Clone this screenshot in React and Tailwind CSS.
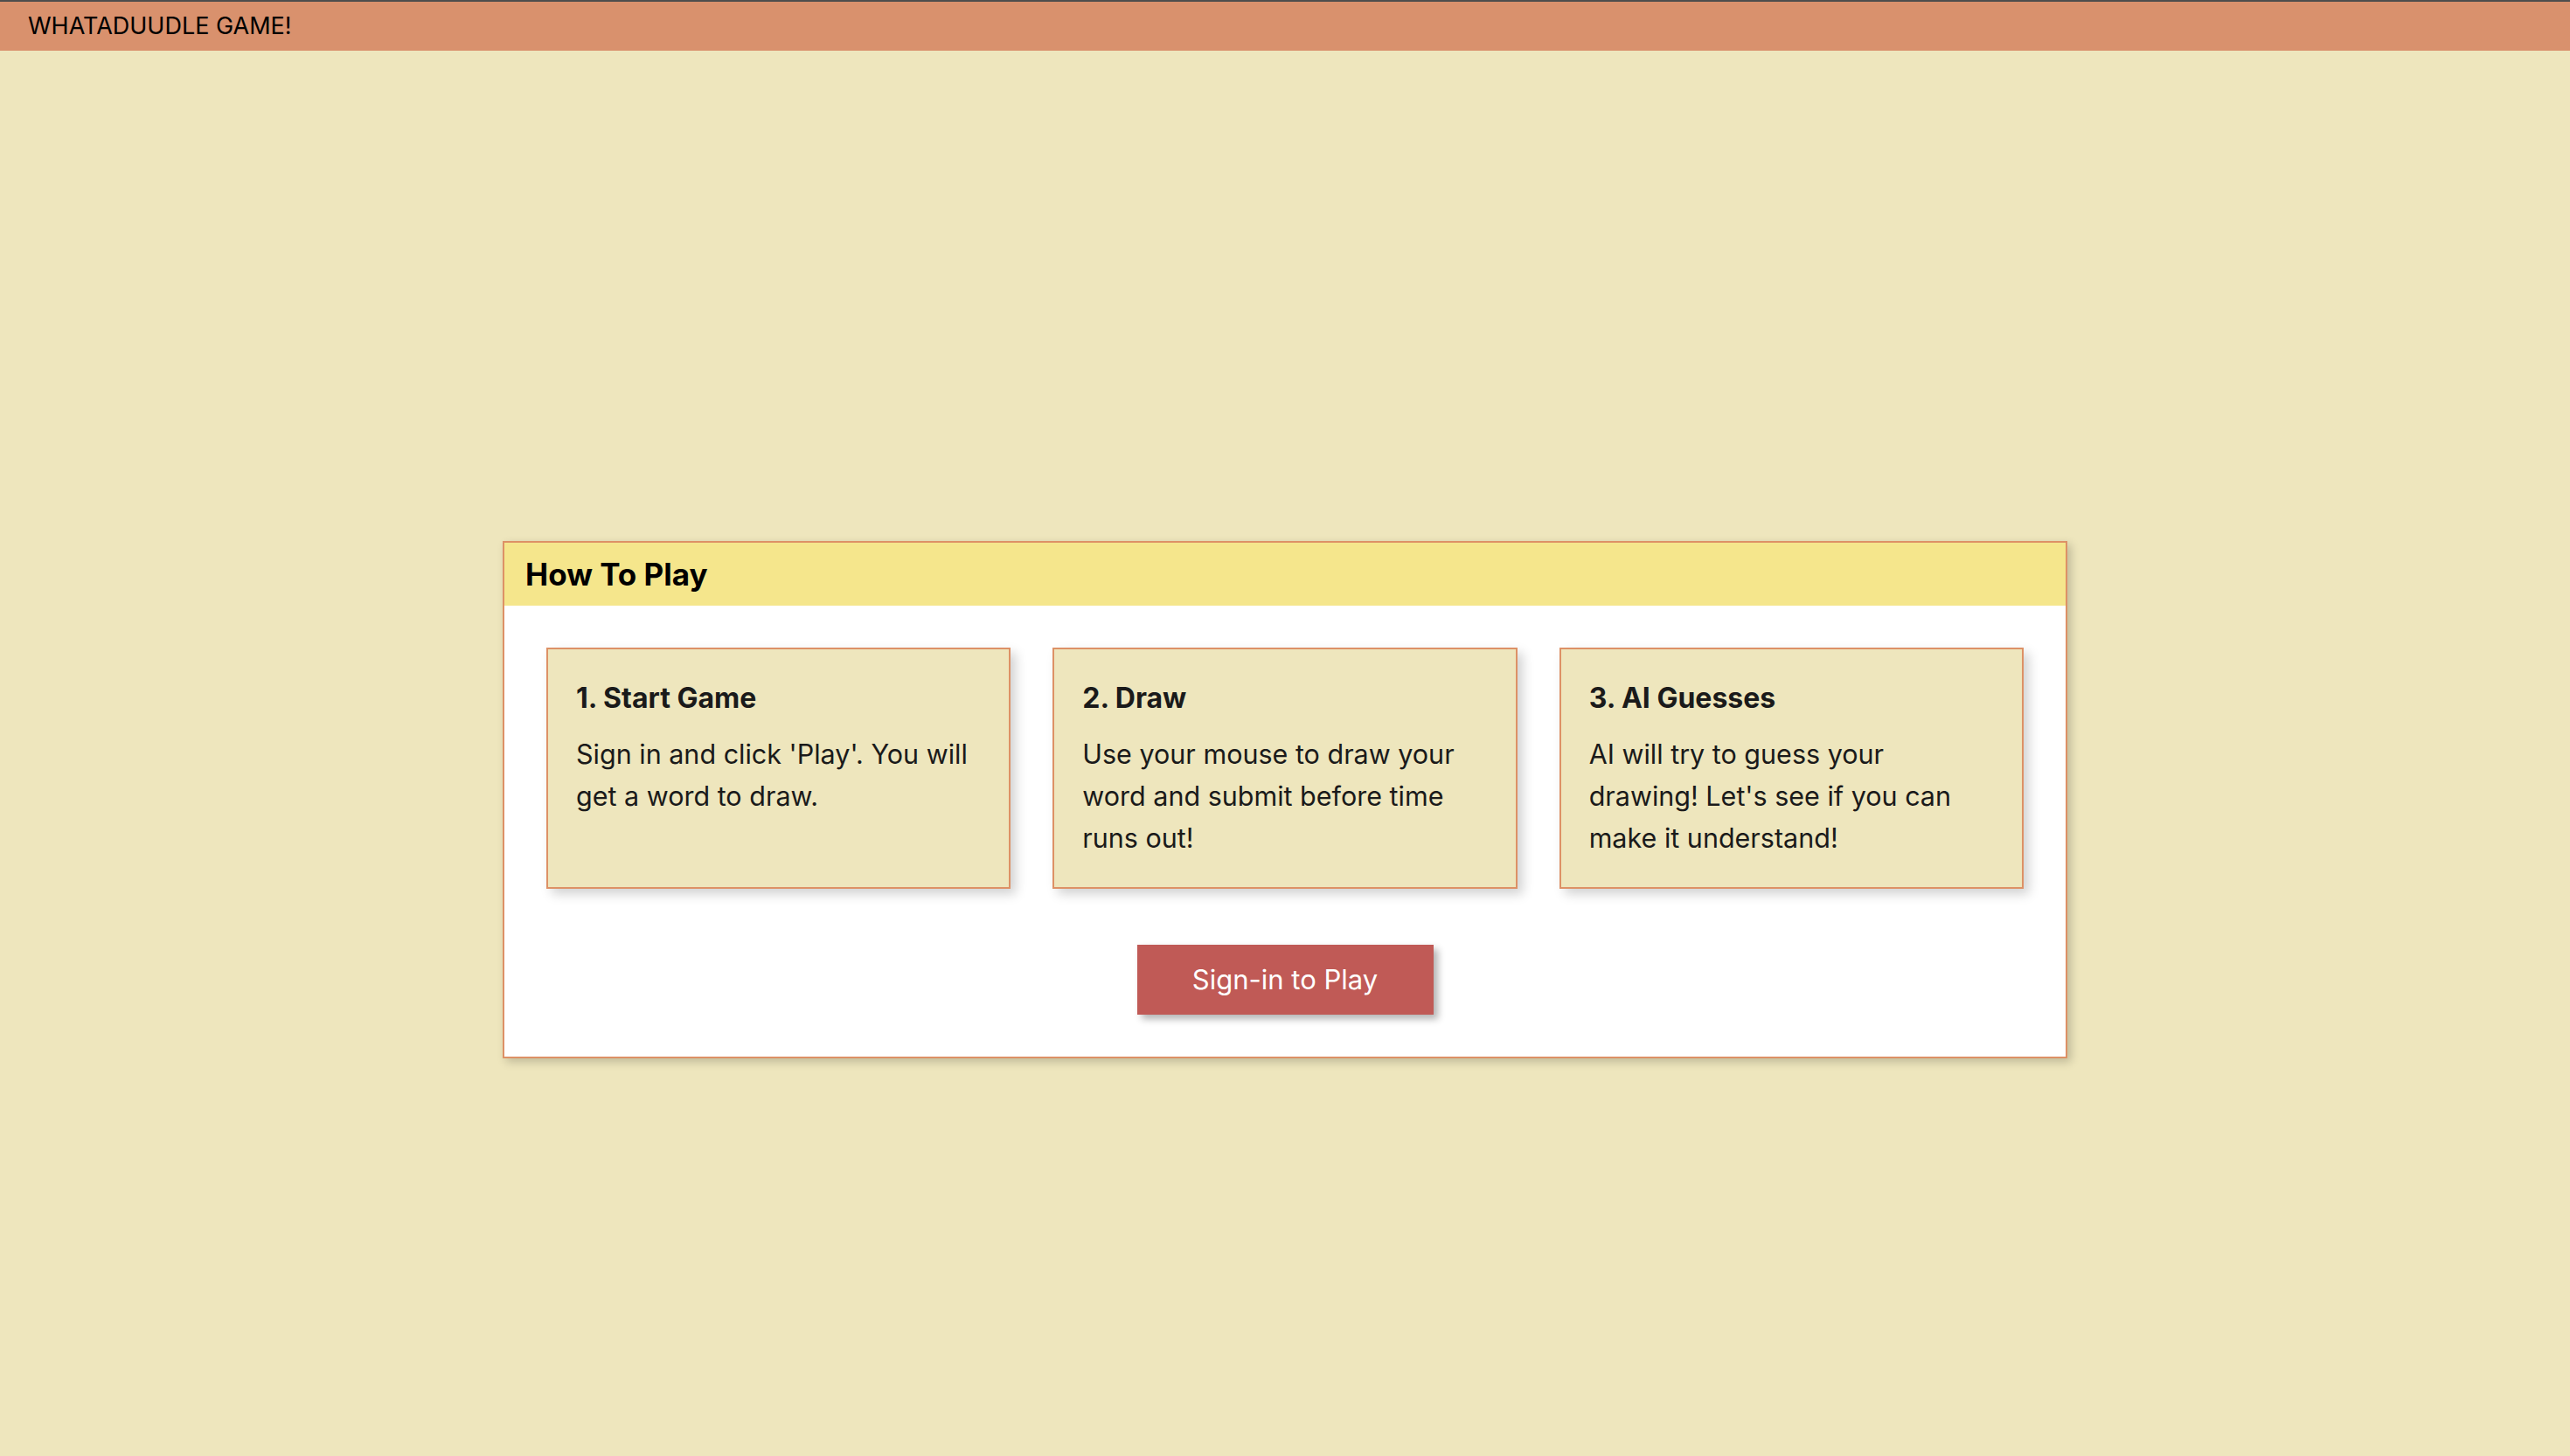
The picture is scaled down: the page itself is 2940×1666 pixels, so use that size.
import React from "react";

const steps = [
  { title: "1. Start Game", text: "Sign in and click 'Play'. You will get a word to draw." },
  { title: "2. Draw", text: "Use your mouse to draw your word and submit before time runs out!" },
  { title: "3. AI Guesses", text: "AI will try to guess your drawing! Let's see if you can make it understand!" },
];

function StepCard({ title, text }) {
  return (
    <div className="bg-[#eee6bd] border-2 border-[#dd9166] p-[32px] shadow-[6px_6px_12px_rgba(0,0,0,0.18)]">
      <h3 className="text-[32px] leading-[48px] font-bold text-[#1a1a1a]">{title}</h3>
      <p className="mt-[16px] text-[30.5px] leading-[48px] text-[#1a1a1a]">{text}</p>
    </div>
  );
}

export default function App() {
  return (
    <div className="min-h-screen bg-[#eee6bd] font-['Inter','Liberation_Sans',sans-serif]">
      {/* top bar */}
      <div className="h-[2px] bg-[#4d4d4d]"></div>
      <header className="h-[56px] bg-[#d9916d] flex items-center px-[32px]">
        <span className="text-[27px] text-black">WHATADUUDLE GAME!</span>
      </header>

      {/* how to play */}
      <main className="flex justify-center pt-[561px] pb-[100px]">
        <div className="w-[1790px] bg-white border-2 border-[#dd9166] shadow-[4px_4px_10px_rgba(0,0,0,0.2)]">
          <div className="h-[72px] bg-[#f5e68c] flex items-center px-[24px]">
            <h2 className="text-[35px] font-bold text-black">How To Play</h2>
          </div>
          <div className="p-[48px]">
            <div className="grid grid-cols-3 gap-[48px]">
              {steps.map((s) => (
                <StepCard key={s.title} title={s.title} text={s.text} />
              ))}
            </div>
            <div className="flex justify-center mt-[64px]">
              <button className="bg-[#c05a56] text-white text-[31px] leading-[48px] w-[339px] py-[16px] shadow-[5px_5px_8px_rgba(0,0,0,0.3)]">
                Sign-in to Play
              </button>
            </div>
          </div>
        </div>
      </main>
    </div>
  );
}
